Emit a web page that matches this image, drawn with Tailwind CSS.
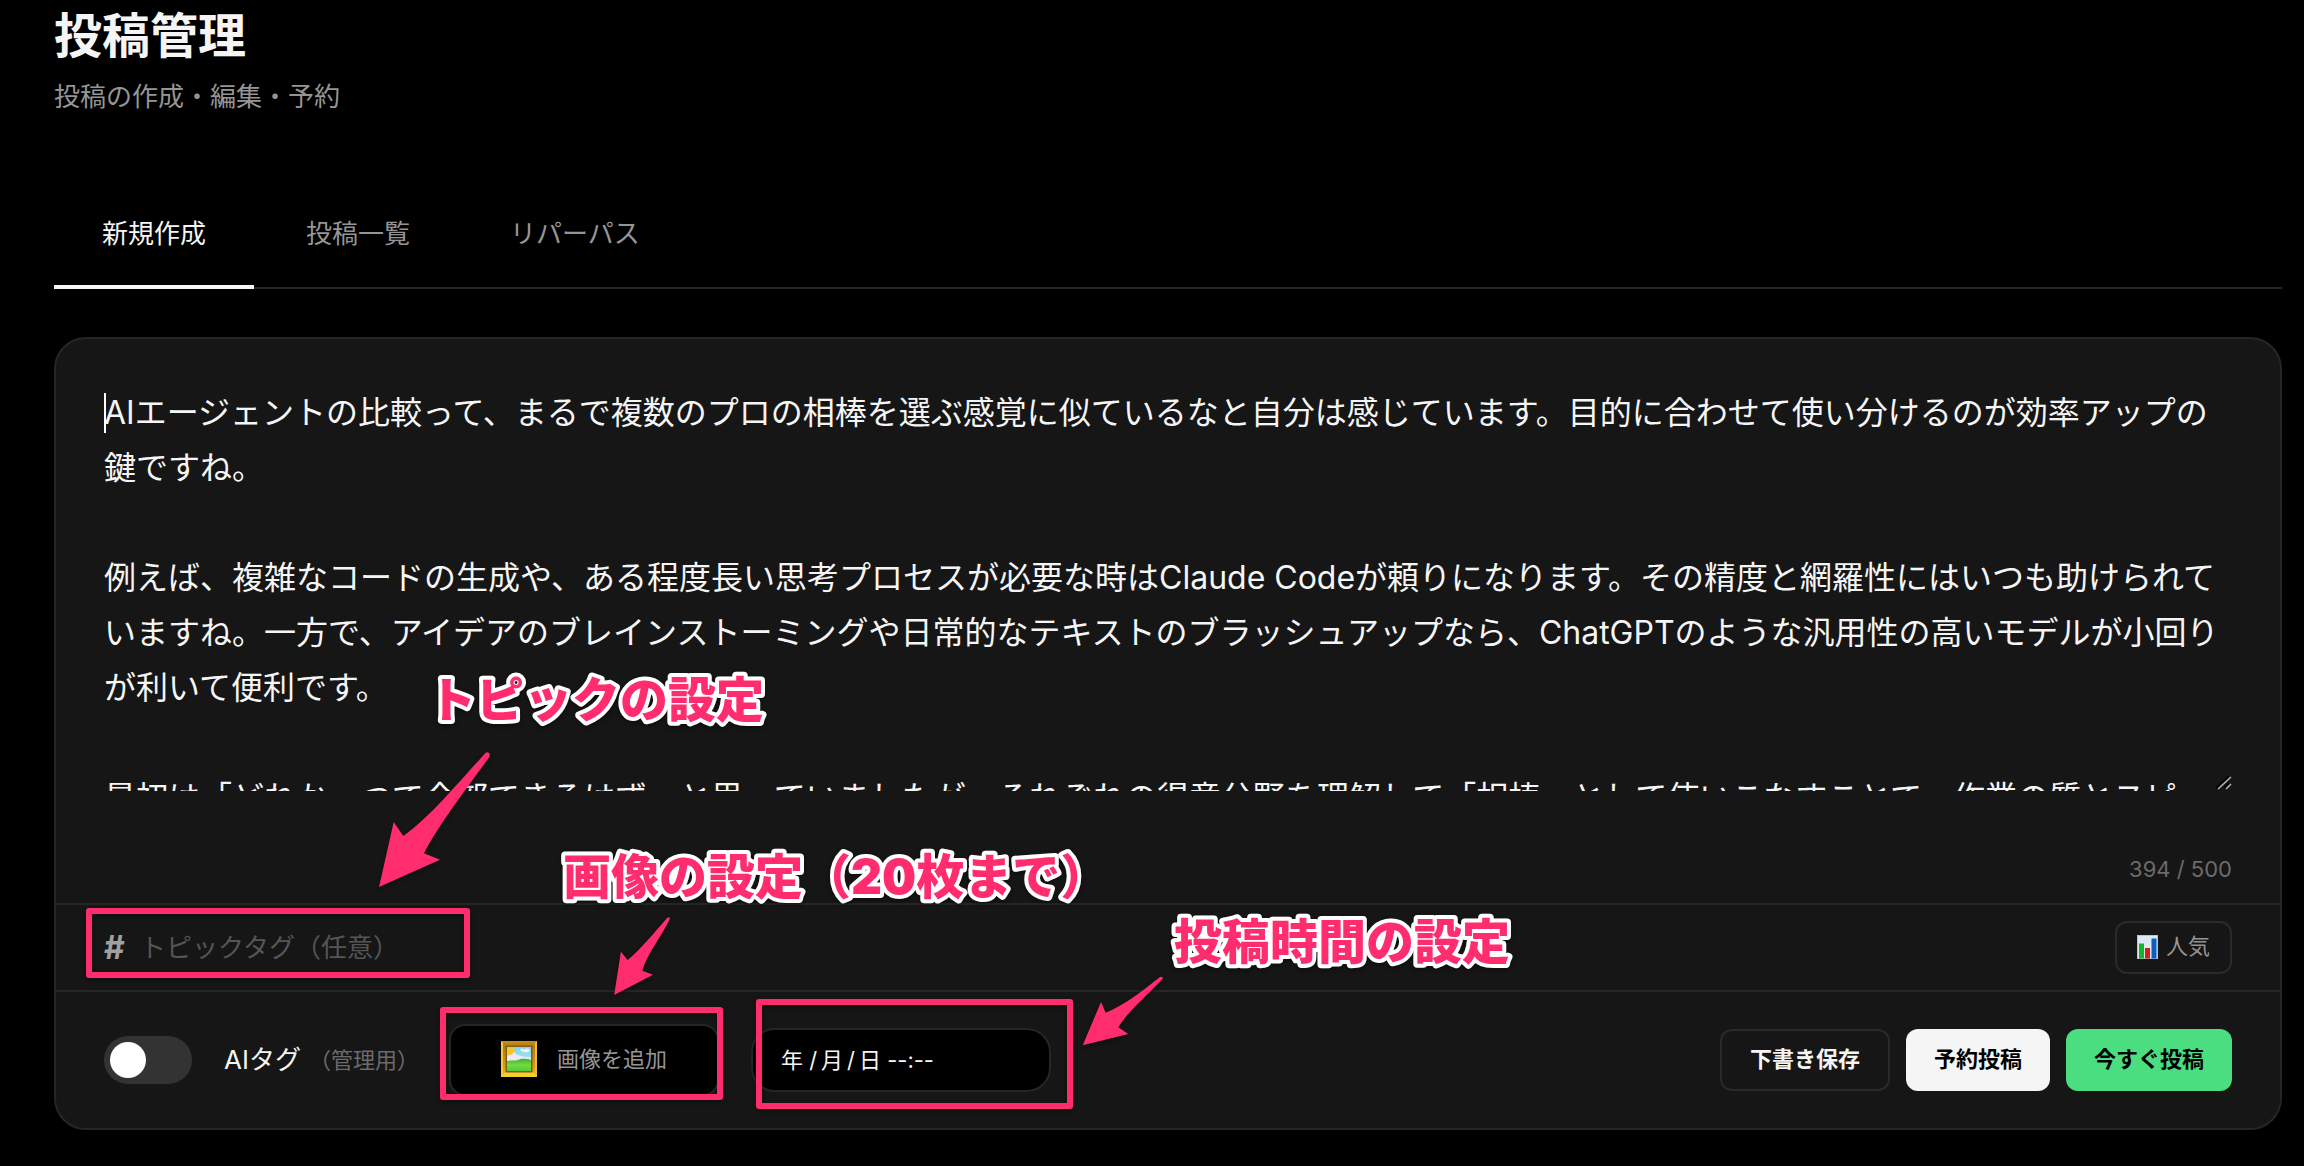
<!DOCTYPE html>
<html lang="ja">
<head>
<meta charset="utf-8">
<meta name="viewport" content="width=device-width, initial-scale=1">
<title>投稿管理</title>
<script src="https://cdn.jsdelivr.net/npm/@tailwindcss/browser@4"></script>
</head>
<body class="relative min-h-screen overflow-x-hidden bg-black font-['Inter','Noto_Sans_CJK_JP',sans-serif] text-[#f5f5f5]">
<main class="pt-2 pr-[22px] pb-9 pl-[54px]">
  <header>
    <h1 class="text-[48px] leading-[56px] font-bold">投稿管理</h1>
    <p class="mt-[13px] text-[26px] leading-[40px] text-[#959595]">投稿の作成・編集・予約</p>
  </header>

  <nav class="mt-16 flex gap-1 border-b-2 border-[#262626] text-[26px] leading-[40px]">
    <a href="#new" class="-mb-[2px] border-b-4 border-[#f5f5f5] px-12 pt-[33px] pb-[31px] text-[#f5f5f5]">新規作成</a>
    <a href="#list" class="-mb-[2px] border-b-4 border-transparent px-12 pt-[33px] pb-[31px] text-[#959595]">投稿一覧</a>
    <a href="#repurpose" class="-mb-[2px] border-b-4 border-transparent px-12 pt-[33px] pb-[31px] text-[#959595]">リパーパス</a>
  </nav>

  <form class="mt-12 rounded-[32px] border-2 border-[#262626] bg-[#161616]">
    <div class="relative flex flex-col px-12 pt-[46px] pb-[18px]">
      <div class="relative">
        <textarea aria-label="投稿本文" class="block h-[406px] w-full resize-none overflow-hidden bg-transparent text-[32px] leading-[55px] text-[#f5f5f5] outline-none">AIエージェントの比較って、まるで複数のプロの相棒を選ぶ感覚に似ているなと自分は感じています。目的に合わせて使い分けるのが効率アップの鍵ですね。

例えば、複雑なコードの生成や、ある程度長い思考プロセスが必要な時はClaude Codeが頼りになります。その精度と網羅性にはいつも助けられていますね。一方で、アイデアのブレインストーミングや日常的なテキストのブラッシュアップなら、ChatGPTのような汎用性の高いモデルが小回りが利いて便利です。

最初は「どれか一つで全部できるはず」と思っていましたが、それぞれの得意分野を理解して「相棒」として使いこなすことで、作業の質とスピード</textarea>
        <span class="absolute top-2 left-0 h-10 w-[2px] bg-white"></span>
        <!-- Resize grip -->
        <svg class="absolute right-0 bottom-0 h-[18px] w-[20px] bg-[#161616]" viewBox="0 0 20 18" fill="none" aria-hidden="true">
          <path d="M4 15 17 3M12 15l5-5" stroke="#000000" stroke-width="2"/>
          <path d="M6 16 19 4M14 16l5-5" stroke="#b5b5b5" stroke-width="1.500"/>
        </svg>
      </div>
      <p class="mt-[62px] text-right text-[22px] leading-[32px] text-[#6b6b6b]">394 / 500</p>
    </div>

    <div class="flex items-center border-t-2 border-[#262626] px-12 py-4">
      <label for="topic" class="w-9 text-[32px] leading-[40px] font-bold text-[#a0a0a0]">#</label>
      <input id="topic" type="text" placeholder="トピックタグ（任意）" class="h-10 min-w-0 flex-1 bg-transparent text-[26px] text-[#f5f5f5] outline-none placeholder:text-[#555555]">
      <button type="button" class="flex h-[53px] items-center gap-2 rounded-xl border-2 border-[#2a2a2a] px-5 pb-[2px] text-[22px] text-[#959595]">
        <svg class="h-6 w-[21px]" viewBox="0 0 21 24" aria-hidden="true">
          <rect width="21" height="24" fill="#b9c4cc"/><rect x="1" y="1" width="19" height="22" fill="#dfe9f1"/>
          <rect x="2" y="8.500" width="5" height="15" fill="#12b52c"/><rect x="8" y="13" width="5" height="10.500" fill="#cf2118"/><rect x="14.500" y="3.500" width="5" height="20" fill="#0b5fc4"/>
        </svg>
        <span>人気</span>
      </button>
    </div>

    <div class="flex items-center border-t-2 border-[#262626] px-12 py-8">
      <label class="flex items-center">
        <input type="checkbox" role="switch" class="relative h-12 w-[88px] appearance-none rounded-full bg-[#333333] before:absolute before:top-[6px] before:left-[6px] before:size-9 before:rounded-full before:bg-white before:content-['']">
        <span class="ml-8 text-[26px] leading-[40px]">AIタグ</span>
        <span class="ml-2 text-[22px] leading-[40px] text-[#6b6b6b]">（管理用）</span>
      </label>
      <button type="button" class="ml-[30px] flex h-[72px] w-[270px] items-center justify-center gap-5 rounded-2xl border-2 border-[#262626] bg-black pb-[2px] text-[22px] text-[#959595]">
        <svg class="size-9" viewBox="0 0 36 36" aria-hidden="true">
          <defs>
            <linearGradient id="frame" x1="0" y1="0" x2="0" y2="1"><stop offset="0" stop-color="#c98f1c"/><stop offset=".15" stop-color="#b47a10"/><stop offset=".8" stop-color="#d9a41c"/><stop offset="1" stop-color="#f2cf2b"/></linearGradient>
            <linearGradient id="sky" x1="0" y1="0" x2="0" y2="1"><stop offset="0" stop-color="#7ed4ee"/><stop offset="1" stop-color="#d6f0f5"/></linearGradient>
            <linearGradient id="grass" x1="0" y1="0" x2="0" y2="1"><stop offset="0" stop-color="#47ad35"/><stop offset=".5" stop-color="#6fdc40"/><stop offset="1" stop-color="#58c93a"/></linearGradient>
          </defs>
          <rect width="36" height="36" fill="url(#frame)"/>
          <path d="M0 36 5 30h26l5 6z" fill="#f6cf2c"/>
          <path d="M0 0v36l2-2V2z" fill="#f0c940"/><path d="M36 0v36l-2-2V2z" fill="#eabf34"/>
          <rect x="4.500" y="4.500" width="27" height="27" fill="#8a5b12"/>
          <rect x="6" y="6" width="24" height="24" fill="url(#sky)"/>
          <circle cx="10" cy="10.500" r="3.800" fill="#f8c81c"/>
          <path d="M6 16c2-3 4-1 5-3 2-3 4-1 4 1 3-1 4 2 6 1 2 2 5 0 9 2v6H6z" fill="#eceaf4"/>
          <path d="M19 9c1-2 3-2 4 0 2-2 5-2 6 1-3 2-7 2-10-1z" fill="#f3f1f8"/>
          <path d="M6 20c5-1 8 0 11-1s6-2 13 0v11H6z" fill="url(#grass)"/>
        </svg>
        <span>画像を追加</span>
      </button>
      <input type="text" aria-label="投稿日時" value="年 /&#8201;月&#8201;/&#8201;日 --:--" class="ml-8 h-16 w-[300px] rounded-3xl border-2 border-[#262626] bg-black px-7 pb-1 text-[22px] text-[#f5f5f5] outline-none">
      <div class="ml-auto flex gap-4 text-[22px] font-semibold">
        <button type="button" class="h-[62px] rounded-xl border-2 border-[#2a2a2a] px-7 pb-[2px] text-[#f5f5f5]">下書き保存</button>
        <button type="button" class="h-[62px] rounded-xl bg-[#f5f5f5] px-7 pb-[2px] text-black">予約投稿</button>
        <button type="submit" class="h-[62px] rounded-xl bg-[#4ade80] px-7 pb-[2px] text-black">今すぐ投稿</button>
      </div>
    </div>
  </form>
</main>

<!-- Callouts drawn over the form -->
<svg class="pointer-events-none absolute top-0 left-0 h-[1166px] w-[2304px] drop-shadow-[0_2px_2px_rgba(0,0,0,0.4)]" viewBox="0 0 2304 1166">
  <g fill="none" stroke="#ff2d6e" stroke-width="6" stroke-linejoin="round">
    <rect x="89" y="911" width="378" height="64"/>
    <rect x="443" y="1010" width="277" height="87"/>
    <rect x="759" y="1002" width="311" height="104"/>
  </g>
  <g fill="#ff2d6e">
    <path d="M379 887 393.700 822 403.300 836C428 819 458 783 485 753.500Q487 751.500 489 753 490.500 755 489 757.500C464 792 438 826 424 853.300L440 859.700z"/>
    <path d="M614.200 995 620.900 951.700 627.600 960C641 949 654 933 667 918Q669 916.500 670 918.500C662 936 648 952 642.300 970.700L653 974.700z"/>
    <path d="M1082.700 1045.300 1101 1002 1105.700 1012.700C1125 1005 1142 991 1160 977Q1162.500 976 1163 978.500C1149 994 1128 1011 1118.300 1027.300L1128.300 1034z"/>
  </g>
  <g class="text-[48px] font-black" fill="#ff2d6e" stroke="#ffffff" stroke-width="8" stroke-linejoin="round" paint-order="stroke fill">
    <text x="428" y="717">トピックの設定</text>
    <text x="563" y="894">画像の設定（20枚まで）</text>
    <text x="1174" y="959">投稿時間の設定</text>
  </g>
</svg>
</body>
</html>
